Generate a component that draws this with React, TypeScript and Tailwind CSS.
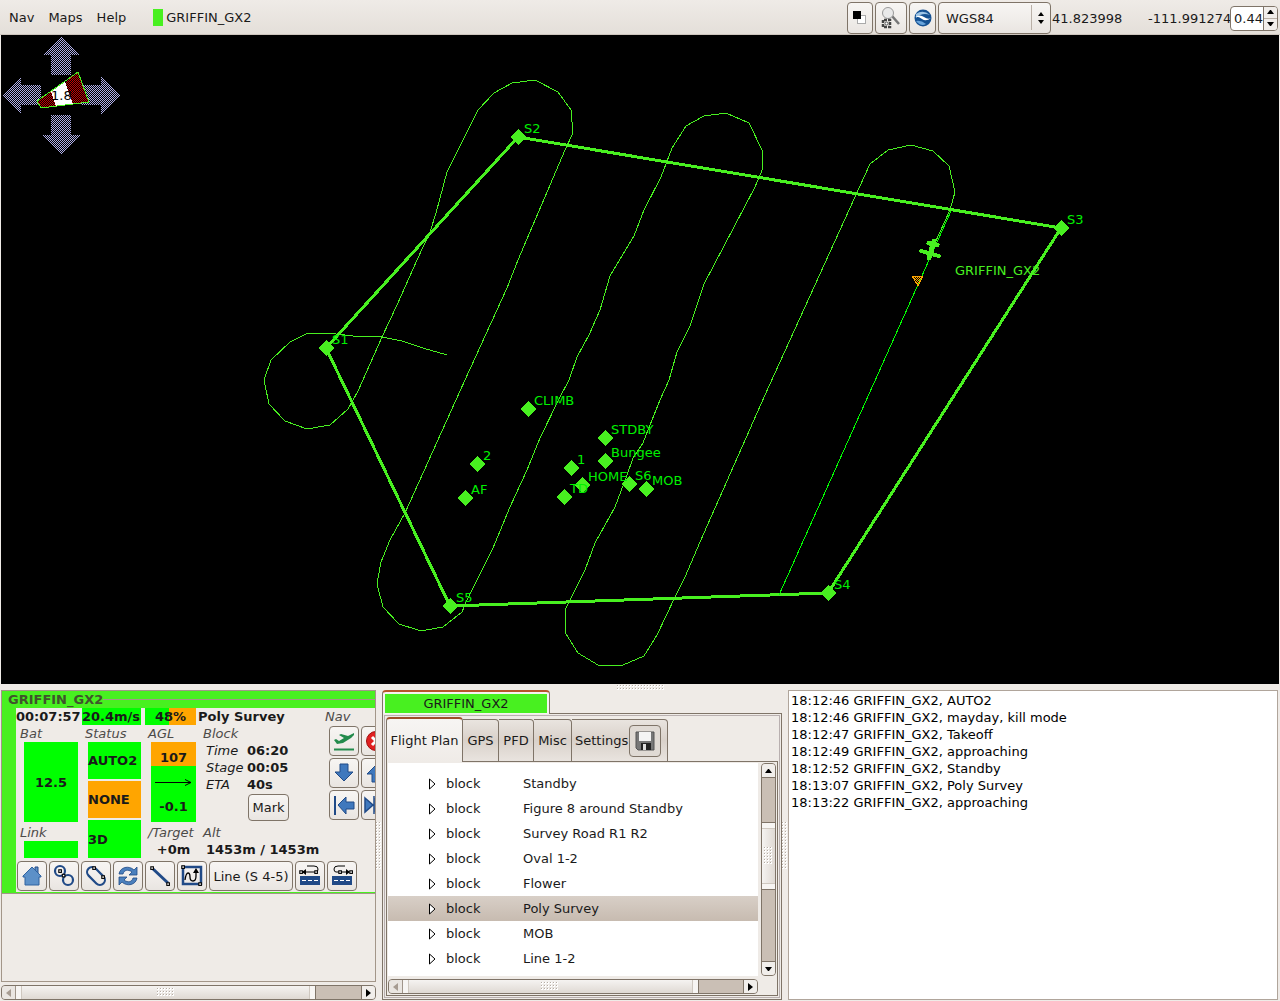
import React, { useState } from 'react';

const WAYPOINTS = [
  { name: 'S2', x: 518, y: 137 },
  { name: 'S3', x: 1061, y: 228 },
  { name: 'S4', x: 828, y: 593 },
  { name: 'S5', x: 450, y: 606 },
  { name: 'S1', x: 326, y: 348 },
  { name: 'CLIMB', x: 528, y: 409 },
  { name: '2', x: 477, y: 464 },
  { name: 'AF', x: 465, y: 498 },
  { name: 'STDBY', x: 605, y: 438 },
  { name: 'Bungee', x: 605, y: 461 },
  { name: '1', x: 571, y: 468 },
  { name: 'HOME', x: 582, y: 485 },
  { name: 'TD', x: 564, y: 497 },
  { name: 'S6', x: 629, y: 484 },
  { name: 'MOB', x: 646, y: 489 },
];

const TRACK =
  '447,355 423,348 402,341 382,337 353,336 336,334 308,333 290,342 271,360 264,380 269,404 285,421 307,429 330,425 348,409 358,391 382,337 397,305 417,260 430,232 436,213 447,172 478,110 494,93 512,83 535,80 558,92 571,110 573,133 565,150 518,260 507,288 465,380 405,513 390,540 381,562 377,584 383,607 399,624 421,631 443,627 462,612 466,602 493,548 510,507 527,470 540,438 560,397 569,380 577,357 589,335 600,310 610,276 634,236 644,210 661,177 672,148 686,126 704,116 726,113 749,123 762,150 763,168 755,187 704,284 690,326 677,352 669,380 660,400 648,430 643,443 633,458 627,475 615,507 595,543 585,570 565,610 566,634 578,653 598,665 623,665 644,656 657,635 675,597 685,577 700,542 765,395 840,230 870,164 888,150 911,145 933,151 949,166 955,192 950,210 934,245';

const BLOCKS = ['Standby', 'Figure 8 around Standby', 'Survey Road R1 R2', 'Oval 1-2', 'Flower', 'Poly Survey', 'MOB', 'Line 1-2'];

const LOG = [
  '18:12:46 GRIFFIN_GX2, AUTO2',
  '18:12:46 GRIFFIN_GX2, mayday, kill mode',
  '18:12:47 GRIFFIN_GX2, Takeoff',
  '18:12:49 GRIFFIN_GX2, approaching',
  '18:12:52 GRIFFIN_GX2, Standby',
  '18:13:07 GRIFFIN_GX2, Poly Survey',
  '18:13:22 GRIFFIN_GX2, approaching',
];

const BTN = 'flex items-center justify-center shrink-0 border border-[#7f7468] rounded bg-linear-to-b from-[#f7f5f3] via-[#f1eeeb] to-[#e9e5e1]';

const Icon: React.FC<{ size?: number; children: React.ReactNode }> = ({ size = 24, children }) => (
  <svg width={size} height={size} viewBox="0 0 24 24" fill="none" aria-hidden="true" className="shrink-0">{children}</svg>
);

const Dot: React.FC<{ x: number; y: number }> = ({ x, y }) => (
  <rect x={x - 1.2} y={y - 1.2} width="2.6" height="2.6" fill="#fff" stroke="#000" strokeWidth="1.1" />
);

const IconButton: React.FC<{ label: string; children: React.ReactNode }> = ({ label, children }) => (
  <button aria-label={label} className={`${BTN} size-[30px]`}>
    <Icon>{children}</Icon>
  </button>
);

const Grip: React.FC<{ w: number; h: number; id: string }> = ({ w, h, id }) => (
  <svg width={w} height={h} aria-hidden="true" className="shrink-0">
    <defs>
      <pattern id={id} width="3" height="3" patternUnits="userSpaceOnUse">
        <rect width="2" height="2" fill="#fff" />
        <rect width="1" height="1" fill="#b5aca3" />
      </pattern>
    </defs>
    <rect width={w} height={h} fill={`url(#${id})`} />
  </svg>
);

const HScroll: React.FC<{ id: string }> = ({ id }) => (
  <div className="flex h-[15px] border border-[#7f7468] rounded bg-[#cabfb5] overflow-hidden shrink-0">
    <button aria-label="Scroll left" className="w-[14px] flex items-center justify-center bg-[#eae6e2] border-r border-[#a0958a]">
      <svg width="5" height="8"><path d="M5 0V8L0 4Z" fill="#a79c92" /></svg>
    </button>
    <div className="flex-1 mr-[12%] flex items-stretch bg-linear-to-b from-[#f5f3f1] to-[#dfd9d3] border-r border-[#7f7468]">
      <span className="w-[6px] bg-[#f7f5f3] border-r border-[#cfc8c0]" />
      <span className="flex-1 flex items-center justify-center"><Grip w={18} h={9} id={id} /></span>
      <span className="w-[6px] bg-[#f7f5f3] border-l border-[#cfc8c0]" />
    </div>
    <button aria-label="Scroll right" className="w-[14px] flex items-center justify-center bg-[#f1eeeb] border-l border-[#7f7468]">
      <svg width="5" height="8"><path d="M0 0V8L5 4Z" fill="#000" /></svg>
    </button>
  </div>
);

const VScroll: React.FC = () => (
  <div className="flex flex-col w-[15px] border border-[#7f7468] rounded bg-[#cabfb5] overflow-hidden shrink-0">
    <button aria-label="Scroll up" className="h-[14px] flex items-center justify-center bg-[#f1eeeb] border-b border-[#7f7468]">
      <svg width="7" height="4"><path d="M0 4H7L4 0H3Z" fill="#000" /></svg>
    </button>
    <div className="flex-[45]" />
    <div className="flex-[67] flex flex-col bg-linear-to-r from-[#f5f3f1] to-[#dfd9d3] border-y border-[#7f7468]">
      <span className="h-[6px] bg-[#f7f5f3] border-b border-[#cfc8c0]" />
      <span className="flex-1 flex items-center justify-center"><Grip w={9} h={18} id="grip-tree-v" /></span>
      <span className="h-[6px] bg-[#f7f5f3] border-t border-[#cfc8c0]" />
    </div>
    <div className="flex-[72]" />
    <button aria-label="Scroll down" className="h-[14px] flex items-center justify-center bg-[#f1eeeb] border-t border-[#7f7468]">
      <svg width="7" height="4"><path d="M0 0H7L4 4H3Z" fill="#000" /></svg>
    </button>
  </div>
);

const MenuBar: React.FC = () => (
  <header className="flex items-center h-[35px] shrink-0 pl-[9px] pr-0.5 bg-linear-to-b from-[#efebe7] to-[#e4dfd9] border-b border-[#cdc5bd]">
    <nav className="flex gap-[14px]">
      <button>Nav</button>
      <button>Maps</button>
      <button>Help</button>
    </nav>
    <div className="flex items-center gap-[3px] ml-[27px]">
      <span className="w-[10px] h-[17px] bg-[#48f020]" />
      <span>GRIFFIN_GX2</span>
    </div>
    <div className="flex items-center ml-auto pt-0.5">
      <div className="flex gap-0.5 mr-0.5">
        <button aria-label="Colors" className={`${BTN} w-[26px] h-8`}>
          <svg width="14" height="14"><rect x="4.500" y="4.500" width="8" height="8" fill="#fff" stroke="#aaa" /><rect width="8" height="8" fill="#000" /></svg>
        </button>
        <button aria-label="Zoom to waypoints" className={`${BTN} w-8 h-8`}>
          <svg width="20" height="22" viewBox="0 0 20 22" fill="none">
            <path d="M11 9L18 17" stroke="#777" strokeWidth="2.500" />
            <circle cx="7" cy="6" r="5.500" fill="#e9e9e9" stroke="#999" />
            <path d="M2 20V13H9V20Z" stroke="#444" strokeWidth="2.500" strokeDasharray="3 1" />
            <circle cx="5.500" cy="16.500" r="1.500" fill="#fff" stroke="#555" />
          </svg>
        </button>
        <button aria-label="Google Earth" className={`${BTN} w-[27px] h-8`}>
          <svg width="18" height="18" viewBox="0 0 18 18">
            <circle cx="9" cy="9" r="8.500" fill="#155193" />
            <path d="M2 5Q9 0 16 6Q8 3 2 9Z" fill="#9dc4e6" />
            <path d="M1 8Q6 5 10 8T17 9Q12 13 8 10T1 8Z" fill="#fff" />
            <path d="M2 12Q7 11 12 15Q7 18 2 12Z" fill="#6aa5dc" />
          </svg>
        </button>
      </div>
      <div className="relative">
        <select aria-label="Geodetic datum" defaultValue="WGS84" className={`${BTN} appearance-none w-[113px] h-8 pl-[7px]`}>
          <option>WGS84</option>
          <option>UTM</option>
        </select>
        <span className="absolute right-[19px] top-[3px] h-[25px] w-px bg-[#b9b0a7]" />
        <svg width="6" height="12" className="absolute right-[7px] top-[10px] pointer-events-none"><path d="M0 4H6L3 0ZM0 8H6L3 12Z" fill="#000" /></svg>
      </div>
      <span className="ml-px w-24">41.823998</span>
      <span className="w-[82px]">-111.991274</span>
      <div className="flex h-[25px] w-12 border border-[#7f7468] rounded bg-white overflow-hidden">
        <input aria-label="Zoom" defaultValue="0.44" className="min-w-0 flex-1 pl-[3px] outline-none" />
        <div className="flex flex-col w-[14px] bg-[#f1eeeb] border-l border-[#7f7468]">
          <button aria-label="Increase" className="flex-1 flex items-center justify-center border-b border-[#b9b0a7]"><svg width="7" height="4"><path d="M0 4H7L4 0H3Z" /></svg></button>
          <button aria-label="Decrease" className="flex-1 flex items-center justify-center"><svg width="7" height="4"><path d="M0 0H7L4 4H3Z" /></svg></button>
        </div>
      </div>
    </div>
  </header>
);

const MapView: React.FC = () => (
  <main className="flex-1 min-h-[300px] mx-px bg-black overflow-hidden">
    <svg className="block w-full h-full" role="img" aria-label="Map">
      <defs>
        <pattern id="stipple" width="2" height="2" patternUnits="userSpaceOnUse" shapeRendering="crispEdges">
          <rect width="1" height="1" fill="#adade6" /><rect x="1" y="1" width="1" height="1" fill="#adade6" />
        </pattern>
        <pattern id="stipple-red" width="2" height="2" patternUnits="userSpaceOnUse" shapeRendering="crispEdges">
          <rect width="2" height="2" fill="#000" /><rect width="1" height="1" fill="#c80000" /><rect x="1" y="1" width="1" height="1" fill="#c80000" />
        </pattern>
        <pattern id="stipple-orange" width="2" height="2" patternUnits="userSpaceOnUse" shapeRendering="crispEdges">
          <rect width="1" height="1" fill="#ffa500" /><rect x="1" y="1" width="1" height="1" fill="#ffa500" />
        </pattern>
      </defs>
      <g transform="translate(-1 -35)" shapeRendering="crispEdges">
        {/* Pan arrows */}
        <g fill="url(#stipple)">
          <path d="M61 36L80 55H71V75H51V55H43Z" />
          <path d="M61 155L81 135H71V115H51V135H42Z" />
          <path d="M2 95L21 77V85H41V105H21V114Z" />
          <path d="M121 95L101 76V85H81V105H101V115Z" />
        </g>
        {/* Wind indicator */}
        <path d="M37 101L51 91L56 106L41 108Z" fill="url(#stipple-red)" />
        <path d="M51 91L65 82L73 104L56 106Z" fill="#fff" />
        <path d="M65 82L78 72L89 102L73 104Z" fill="url(#stipple-red)" />
        <path d="M37 101L78 72L89 102L41 108Z" fill="none" stroke="#48f020" />
        <text x="51" y="100" fontSize="13" fill="#000">1.8</text>

        {/* Survey area */}
        <path d="M326 348L518 137L1061 228L828 593L450 606Z" fill="none" stroke="#48f020" strokeWidth="3" />
        <polyline points={TRACK} fill="none" stroke="#48f020" strokeWidth="1" />
        <path d="M951 211L779 595" fill="none" stroke="#00ff00" />
        {WAYPOINTS.map((wp) => (
          <path key={wp.name} d={`M${wp.x - 8} ${wp.y}l8 -8l8 8l-8 8Z`} fill="#48f020" />
        ))}
        {WAYPOINTS.map((wp) => (
          <text key={wp.name} x={wp.x + 6} y={wp.y - 4} fontSize="13" fill="#00f000">{wp.name}</text>
        ))}

        {/* Aircraft and carrot */}
        <path d="M912 276H923L918 286Z" fill="url(#stipple-orange)" stroke="#ffa500" />
        <g stroke="#48f020" strokeLinecap="round">
          <path d="M934 241L929 258" strokeWidth="5" />
          <path d="M921 251L939 256" strokeWidth="4" />
          <path d="M929 243L937 245" strokeWidth="5" />
        </g>
        <text x="955" y="275" fontSize="13" fill="#48f020">GRIFFIN_GX2</text>
      </g>
    </svg>
  </main>
);

const Strip: React.FC = () => (
  <section className="flex flex-col min-w-0 gap-[3px]">
    <div className="flex-1 border border-[#a39689] overflow-hidden">
      <div className="bg-[#48f020] border-b border-[#a39689] pl-3.5 pb-px min-w-[375px]">
        <div className="flex items-center h-[17px] -ml-2 font-bold text-[#40542c]">
          GRIFFIN_GX2
          <span className="flex-1 h-px bg-[#a39689]" />
        </div>
        <div className="flex flex-col gap-[3px] bg-[#efebe7] pb-px">
          <div className="flex leading-[17px]">
            <div className="w-[66px] shrink-0">
              <div className="font-bold whitespace-nowrap">00:07:57</div>
              <div className="pl-1 italic text-[#4c4a48]">Bat</div>
              <div className="ml-2 mr-1 h-20 mb-0.5 flex items-center justify-center bg-[#00ff00] font-bold">12.5</div>
              <div className="pl-1 italic text-[#4c4a48]">Link</div>
              <div className="ml-2 mr-1 h-[17px] bg-[#00ff00]" />
            </div>
            <div className="w-[63px] shrink-0">
              <div className="mr-1 bg-[#00ff00] font-bold whitespace-nowrap">20.4m/s</div>
              <div className="pl-[3px] italic text-[#4c4a48]">Status</div>
              <div className="flex flex-col gap-0.5 ml-1.5 mr-1 font-bold">
                <div className="h-[37px] flex items-center bg-[#00ff00]">AUTO2</div>
                <div className="h-[37px] flex items-center bg-[#ffa500]">NONE</div>
                <div className="h-[38px] flex items-center bg-[#00ff00]">3D</div>
              </div>
            </div>
            <div className="w-[53px] shrink-0">
              <div className="mr-0.5 bg-linear-to-r from-[#00ff00] from-48% to-[#ffa500] to-48% text-center font-bold">48%</div>
              <div className="pl-[3px] italic text-[#4c4a48]">AGL</div>
              <div className="ml-1.5 mr-0.5 h-20 mb-0.5 flex flex-col items-center justify-between py-[7px] bg-linear-to-b from-[#ffa500] from-30% to-[#00ff00] to-30% font-bold">
                <span>107</span>
                <svg width="37" height="7" fill="none" stroke="#000"><path d="M0 3.500H36M30 .5L36 3.500L30 6.500" /></svg>
                <span>-0.1</span>
              </div>
              <div className="pl-[3px] italic text-[#4c4a48]">/Target</div>
              <div className="text-center font-bold pl-1">+0m</div>
            </div>
            <div className="w-[127px] shrink-0">
              <div className="font-bold">Poly Survey</div>
              <div className="pl-[5px] italic text-[#4c4a48]">Block</div>
              <dl className="grid grid-cols-[41px_1fr] pl-2">
                <dt className="italic">Time</dt><dd className="font-bold">06:20</dd>
                <dt className="italic">Stage</dt><dd className="font-bold">00:05</dd>
                <dt className="italic">ETA</dt><dd className="font-bold">40s</dd>
              </dl>
              <button className={`${BTN} mt-px mb-[3px] ml-[50px] w-[41px] h-[27px]`}>Mark</button>
              <div className="pl-[5px] italic text-[#4c4a48]">Alt</div>
              <div className="pl-2 font-bold whitespace-nowrap">1453m / 1453m</div>
            </div>
            <div className="shrink-0">
              <div className="italic text-[#4c4a48] mb-px">Nav</div>
              <div className="grid grid-cols-[30px_30px] gap-0.5 pl-1">
                <IconButton label="Takeoff">
                  <path d="M2 11L4 10L7 12L12 9L7 6L9 5L16 7L22 4V6L19 9L11 14L5 15Z" fill="#238b4c" /><path d="M2 20.500H22" stroke="#238b4c" strokeWidth="2" />
                </IconButton>
                <IconButton label="Kill">
                  <circle cx="12" cy="12" r="9.500" fill="#e02020" stroke="#a00d0d" /><path d="M8 8L16 16M16 8L8 16" stroke="#fff" strokeWidth="3" />
                </IconButton>
                <IconButton label="Down">
                  <path d="M8 3H16V11H21L12 20L3 11H8Z" fill="#3f78bd" stroke="#204a87" />
                </IconButton>
                <IconButton label="Up">
                  <path d="M8 21H16V13H21L12 4L3 13H8Z" fill="#3f78bd" stroke="#204a87" />
                </IconButton>
                <IconButton label="Previous">
                  <path d="M6 12L14 4V9H22V16H14V21Z" fill="#3f78bd" stroke="#204a87" /><path d="M3 3V22" stroke="#204a87" strokeWidth="2" />
                </IconButton>
                <IconButton label="Next">
                  <path d="M1 5L9 12L1 19ZM10 3V21" fill="#3f78bd" stroke="#204a87" strokeWidth="1.500" /><path d="M11 5L19 12L11 19Z" fill="#3f78bd" stroke="#204a87" />
                </IconButton>
              </div>
            </div>
          </div>

          <div className="flex gap-0.5 pl-px">
            <IconButton label="Home">
              <path d="M15 6V3H18V9Z" fill="#5c90c8" stroke="#204a87" />
              <path d="M12 3L21 12V13H19V21H5V13H3V12Z" fill="#5c90c8" stroke="#2f62a0" />
            </IconButton>
            <IconButton label="Figure 8">
              <g stroke="#204a87" strokeWidth="2.200"><circle cx="8" cy="7" r="5" /><circle cx="16" cy="16" r="5" /></g>
              <Dot x={8} y={7} /><Dot x={11.5} y={11.5} />
            </IconButton>
            <IconButton label="Oval">
              <rect x="1.500" y="7" width="21" height="10" rx="5" transform="rotate(45 12 12)" stroke="#204a87" strokeWidth="2.200" />
              <Dot x={10} y={4} /><Dot x={19} y={13} />
            </IconButton>
            <IconButton label="Circle">
              <path d="M3 10C4 3 13 1 18 6L21 3V11H13L16 8C12 5 8 6 7 10Z" fill="#4b80bd" stroke="#204a87" strokeWidth=".8" />
              <path d="M21 14C20 21 11 23 6 18L3 21V13H11L8 16C12 19 16 18 17 14Z" fill="#4b80bd" stroke="#204a87" strokeWidth=".8" />
            </IconButton>
            <IconButton label="Line">
              <path d="M4 4L20 19" stroke="#204a87" strokeWidth="3" /><Dot x={4} y={4} /><Dot x={20} y={20} />
            </IconButton>
            <IconButton label="Survey">
              <path d="M3 3H21V20H3Z" stroke="#204a87" strokeWidth="2.500" />
              <path d="M5 16Q6 9 8 9T10 13T13 17T16 12V7" stroke="#000" strokeWidth="1.300" /><path d="M13 9L16 4L19 9Z" fill="#000" />
              <Dot x={3} y={3} /><Dot x={20} y={20} />
            </IconButton>
            <button className={`${BTN} w-[84px] h-[30px] whitespace-nowrap`}>Line (S 4-5)</button>
            <IconButton label="Road left">
              <rect x="2" y="12" width="20" height="9" fill="#204a87" /><path d="M4 16.500H20" stroke="#fff" strokeDasharray="4 2" />
              <path d="M9 2H16Q20 2 20 5T18 8H5" stroke="#000" /><path d="M4 8L8 5V11Z" fill="#000" /><Dot x={3} y={8} /><Dot x={18} y={8} />
            </IconButton>
            <IconButton label="Road right">
              <rect x="2" y="12" width="20" height="9" fill="#204a87" /><path d="M4 16.500H20" stroke="#fff" strokeDasharray="4 2" />
              <path d="M15 2H8Q4 2 4 5T6 8H19" stroke="#000" /><path d="M20 8L16 5V11Z" fill="#000" /><Dot x={10} y={8} /><Dot x={21} y={8} />
            </IconButton>
          </div>
        </div>
      </div>
    </div>
    <HScroll id="grip-strip" />
  </section>
);

const TABS = [
  { name: 'GPS', width: 'w-9' },
  { name: 'PFD', width: 'w-[35px]' },
  { name: 'Misc', width: 'w-[38px]' },
];

const Notebook: React.FC = () => {
  const [selected, setSelected] = useState('Poly Survey');

  return (
    <section className="flex flex-col min-w-0">
      <button className="self-start w-[42%] h-6 p-0.5 pb-px -mb-px relative border border-b-0 border-t-2 border-[#7f7468] border-t-[#b5562a] rounded-t bg-[#f5f3f1]">
        <span className="flex items-center justify-center h-full bg-[#48f020]">GRIFFIN_GX2</span>
      </button>
      <div className="flex flex-col flex-1 border border-[#7f7468] p-px">
        <div className="flex flex-col flex-1 border border-[#b9b0b0] p-px">
          <div className="flex items-end -mb-px">
            <button className="relative w-[77px] h-[45px] whitespace-nowrap border border-b-0 border-t-2 border-[#7f7468] border-t-[#a04e2a] rounded-t bg-linear-to-b from-[#f7f5f3] to-[#efebe7]">Flight Plan</button>
            {TABS.map((tab) => (
              <button key={tab.name} className={`${tab.width} h-[43px] whitespace-nowrap border border-l-0 border-[#7f7468] rounded-tr bg-linear-to-b from-[#e9e4df] via-[#d9d1ca] to-[#e9e4df]`}>{tab.name}</button>
            ))}
            <div className="flex items-center h-[43px] pl-[3px] pr-1.5 border border-l-0 border-[#7f7468] rounded-tr bg-linear-to-b from-[#e9e4df] via-[#d9d1ca] to-[#e9e4df]">
              <button>Settings</button>
              <button aria-label="Save settings" className="flex items-center justify-center size-8 ml-px border border-[#7f7468] rounded bg-[#e0dad4]">
                <Icon>
                  <path d="M3 3H21V21H5L3 19Z" fill="#777" stroke="#555" />
                  <path d="M6 3H18V12H6Z" fill="#f4f4f4" /><path d="M8 14H18V21H8Z" fill="#222" /><path d="M10 15H13V21H10Z" fill="#ddd" />
                </Icon>
              </button>
            </div>
          </div>
          <div className="flex flex-1 gap-[3px] border border-[#7f7468] p-px">
            <div className="flex flex-col flex-1 min-w-0 gap-[3px]">
              <div className="flex-1 bg-white pt-2 pb-[5px]">
                <table className="w-full border-collapse">
                  <tbody>
                    {BLOCKS.map((block) => (
                      <tr
                        key={block}
                        onClick={() => setSelected(block)}
                        className={block === selected ? 'h-[25px] bg-linear-to-b from-[#d8cfc7] to-[#c7bbb0]' : 'h-[25px]'}
                      >
                        <td className="w-[58px] p-0 pl-10">
                          <svg width="8" height="12" className="block"><path d="M1.500 1V11L7 6Z" fill="#fff" stroke="#000" /></svg>
                        </td>
                        <td className="w-[77px] p-0">block</td>
                        <td className="p-0">{block}</td>
                      </tr>
                    ))}
                  </tbody>
                </table>
              </div>
              <HScroll id="grip-tree-h" />
            </div>
            <div className="flex pb-[18px]"><VScroll /></div>
          </div>
        </div>
      </div>
    </section>
  );
};

const App: React.FC = () => (
  <div className="flex flex-col h-screen bg-[#efebe7] text-[#1a1a1a] text-[13px] leading-[17px] font-['DejaVu_Sans',sans-serif] overflow-hidden">
    <MenuBar />
    <MapView />
    <div className="flex items-center justify-center h-1.5 shrink-0"><Grip w={47} h={5} id="grip-pane" /></div>
    <div className="grid grid-cols-[375fr_6px_400fr_6px_490fr] shrink-0 pl-px pr-0.5 pb-px">
      <Strip />
      <div className="flex items-center"><Grip w={5} h={47} id="grip-left" /></div>
      <Notebook />
      <div className="flex items-center"><Grip w={5} h={47} id="grip-right" /></div>
      <ul className="min-w-0 px-0.5 py-px bg-white border border-[#b0a59b] text-black">
        {LOG.map((line) => <li key={line}>{line}</li>)}
      </ul>
    </div>
  </div>
);

export default App;
